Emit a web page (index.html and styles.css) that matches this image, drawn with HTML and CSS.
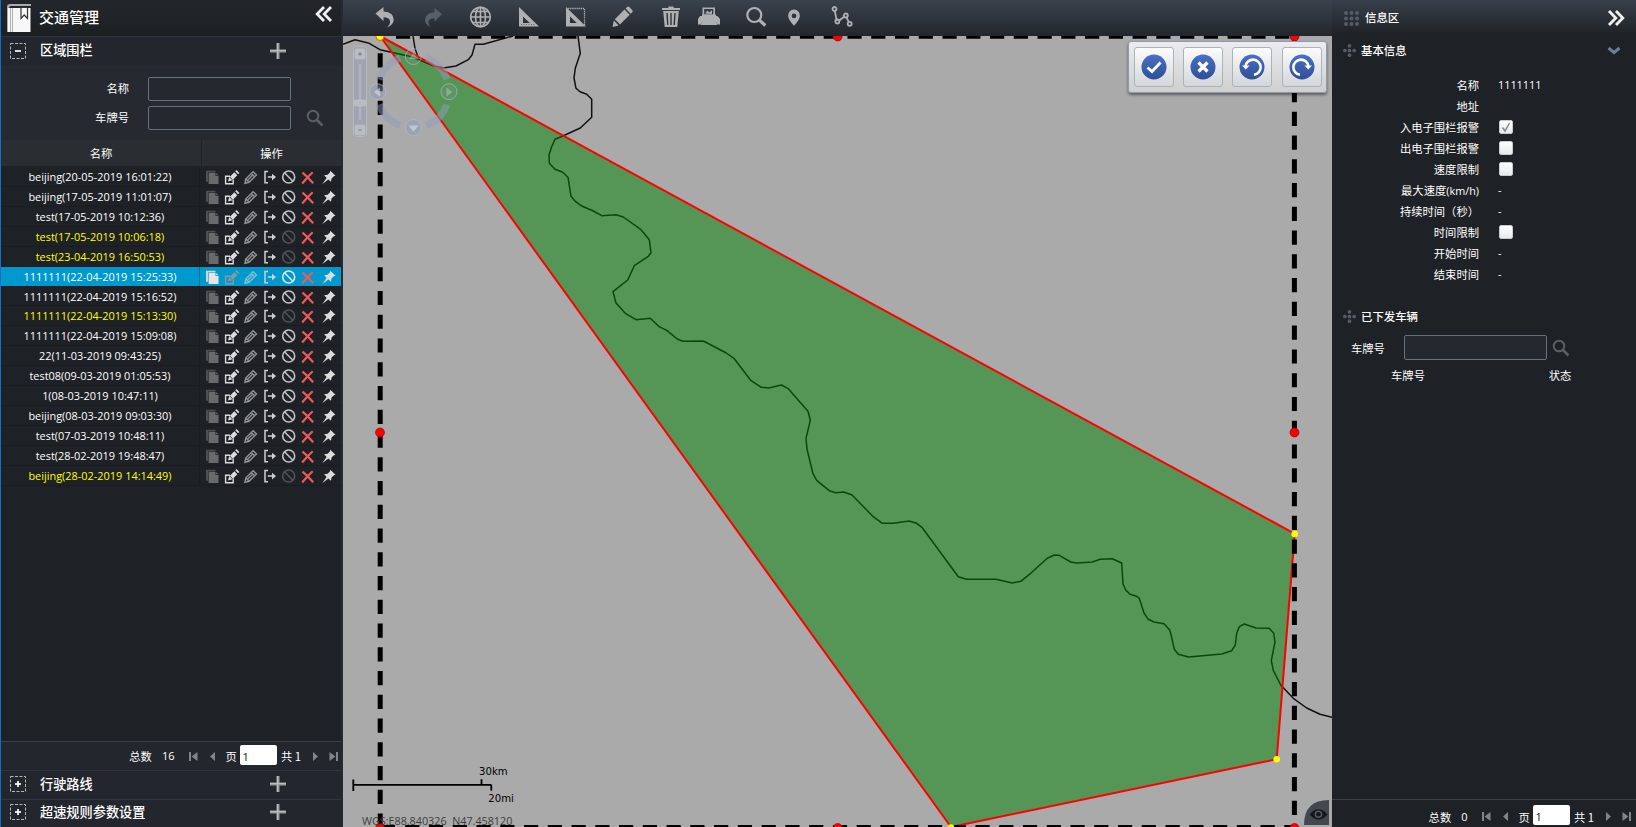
FILE: index.html
```html
<!DOCTYPE html>
<html lang="zh-CN">
<head>
<meta charset="utf-8">
<title>交通管理</title>
<link rel="stylesheet" href="styles.css">
</head>
<body>
<svg class="defs" aria-hidden="true">
  <symbol id="acts" viewBox="0 0 141 20">
    <path class="i-copy-back" d="M6 3.8h9.500v1.600H8v9.400H6z"/>
    <path class="i-copy" d="M8.600 6h6.900v3h3v8H8.600zM16.200 6l2.300 2.300h-2.300z"/>
    <g class="i-edit"><path d="M30 9.200h-4.400v7.600h7.600V12.500" fill="none" stroke-width="1.400"/><path d="M28 14.500l1.200-4.500 3.300 3.300zM29.900 9.800l4.400-4.600 3 3-4.400 4.600zM35.200 4.300l1.300-1.300 2.900 2.900-1.300 1.300z" stroke="none"/></g>
    <g class="i-pen"><path d="M44.9 16.300l.8-4.300 7.400-7.300 3.400 3.200-7.500 7.400zM45.700 12l3.300 3.300M51.300 6.500l3.300 3.300M47.800 13l4.500-4.400" fill="none" stroke-width="1.400"/></g>
    <g class="i-exit"><path d="M68 4.400h-3v11.400h3M67.800 10.100h6" fill="none" stroke-width="1.500"/><path d="M72 6.800l4 3.300-4 3.300z" stroke="none"/></g>
    <g class="i-ban"><circle cx="88.700" cy="10" r="6" fill="none" stroke-width="1.600"/><path d="M84.500 5.800l8.400 8.400" stroke-width="1.600"/></g>
    <path class="i-del" d="M102.500 5.600q5 4 10.700 10.700M112.700 5.200q-5 4.500-10.500 11.300"/>
    <path class="i-pin" d="M130.300 3.800l5.200 4.900-1.600.5-2.400 2.300-.5 3.300-2.700-2.300-6.100 4.700 4.400-6.300-2.500-2.600 3.500-.5 2.300-2.300z"/>
  </symbol>
  <symbol id="plus" viewBox="0 0 18 18"><path d="M9 1v16M1 9h16" stroke="#9b9ea1" stroke-width="3"/><path d="M8.500 1v16M1 8.500h16" stroke="#b9bbbd" stroke-width="1"/></symbol>
  <symbol id="search" viewBox="0 0 18 18"><circle cx="7" cy="7" r="5.300" fill="none" stroke="#5b5f62" stroke-width="2"/><path d="M11 11l5.500 5.500" stroke="#5b5f62" stroke-width="2.600"/></symbol>
  <symbol id="dblleft" viewBox="0 0 18 16"><path d="M9 1L2.200 8 9 15M16 1L9.200 8l6.800 7" fill="none" stroke="#f0f0f0" stroke-width="2.800"/></symbol>
  <symbol id="cross" viewBox="0 0 14 14"><g fill="#555d68"><circle cx="7" cy="2" r="2"/><circle cx="7" cy="7" r="2"/><circle cx="7" cy="12" r="2"/><circle cx="2" cy="7" r="2"/><circle cx="12" cy="7" r="2"/></g></symbol>
  <symbol id="first" viewBox="0 0 9 9"><path d="M0 0h2v9H0zM8.500 0v9L2.500 4.500z" fill="#80858a"/></symbol>
  <symbol id="prev" viewBox="0 0 9 9"><path d="M7 0v9L2 4.500z" fill="#80858a"/></symbol>
  <symbol id="next" viewBox="0 0 9 9"><path d="M2 0v9l5-4.500z" fill="#80858a"/></symbol>
  <symbol id="last" viewBox="0 0 9 9"><path d="M7 0h2v9H7zM.5 0v9l6-4.500z" fill="#80858a"/></symbol>
  <symbol id="box" viewBox="0 0 18 18"><rect x="1.500" y="1.500" width="15" height="15" fill="none" stroke="#b4b7ba" stroke-width="1" stroke-dasharray="3 1.500"/><path d="M6 9h6" stroke="#fff" stroke-width="1.700"/></symbol>
  <linearGradient id="blue" x1="0" y1="0" x2="0" y2="1"><stop offset="0" stop-color="#4a70c4"/><stop offset="1" stop-color="#2f4f97"/></linearGradient>
</svg>

<div class="app">
  <aside class="left">
    <header class="left-head">
      <svg class="book" width="24" height="28" viewBox="0 0 24 28"><path d="M3 0h21v2H3.500L2 3.500V28H0V3q0-3 3-3z" fill="#a9acae"/><path d="M1 4h22.500v24H1z" fill="#f7f7f7"/><path d="M3.500 4v24M5.500 4v24" stroke="#9a9da0" stroke-width=".8"/><path d="M14 3.500h6.500v11L17.200 11 14 14.500z" fill="#f7f7f7" stroke="#303438" stroke-width="1.200"/></svg>
      <h1>交通管理</h1>
      <svg class="collapse" width="18" height="16"><use href="#dblleft"/></svg>
    </header>
    <div class="section">
      <svg width="18" height="18"><use href="#box"/></svg><h2>区域围栏</h2><svg class="add" width="18" height="18"><use href="#plus"/></svg>
    </div>
    <form class="filter">
      <label>名称</label><input type="text"><span></span>
      <label>车牌号</label><input type="text"><svg width="18" height="18"><use href="#search"/></svg>
    </form>
    <div class="thead"><span>名称</span><span>操作</span></div>
    <ul class="list">
      <li><span>beijing(20-05-2019 16:01:22)</span><svg><use href="#acts"/></svg></li>
      <li><span>beijing(17-05-2019 11:01:07)</span><svg><use href="#acts"/></svg></li>
      <li><span>test(17-05-2019 10:12:36)</span><svg><use href="#acts"/></svg></li>
      <li class="off"><span>test(17-05-2019 10:06:18)</span><svg><use href="#acts"/></svg></li>
      <li class="off"><span>test(23-04-2019 16:50:53)</span><svg><use href="#acts"/></svg></li>
      <li class="sel"><span>1111111(22-04-2019 15:25:33)</span><svg><use href="#acts"/></svg></li>
      <li><span>1111111(22-04-2019 15:16:52)</span><svg><use href="#acts"/></svg></li>
      <li class="off"><span>1111111(22-04-2019 15:13:30)</span><svg><use href="#acts"/></svg></li>
      <li><span>1111111(22-04-2019 15:09:08)</span><svg><use href="#acts"/></svg></li>
      <li><span>22(11-03-2019 09:43:25)</span><svg><use href="#acts"/></svg></li>
      <li><span>test08(09-03-2019 01:05:53)</span><svg><use href="#acts"/></svg></li>
      <li><span>1(08-03-2019 10:47:11)</span><svg><use href="#acts"/></svg></li>
      <li><span>beijing(08-03-2019 09:03:30)</span><svg><use href="#acts"/></svg></li>
      <li><span>test(07-03-2019 10:48:11)</span><svg><use href="#acts"/></svg></li>
      <li><span>test(28-02-2019 19:48:47)</span><svg><use href="#acts"/></svg></li>
      <li class="off"><span>beijing(28-02-2019 14:14:49)</span><svg><use href="#acts"/></svg></li>
    </ul>
    <div class="pager">
      <span class="total">总数</span><span class="count">16</span>
      <svg class="p1"><use href="#first"/></svg><svg class="p2"><use href="#prev"/></svg>
      <span class="pg">页</span><input type="text" value="1"><span class="all">共 1</span>
      <svg class="p3"><use href="#next"/></svg><svg class="p4"><use href="#last"/></svg>
    </div>
    <div class="section closed">
      <svg width="18" height="18" viewBox="0 0 18 18"><use href="#box"/><path d="M9 6v6" stroke="#fff" stroke-width="1.700"/></svg><h2>行驶路线</h2><svg class="add" width="18" height="18"><use href="#plus"/></svg>
    </div>
    <div class="section closed">
      <svg width="18" height="18" viewBox="0 0 18 18"><use href="#box"/><path d="M9 6v6" stroke="#fff" stroke-width="1.700"/></svg><h2>超速规则参数设置</h2><svg class="add" width="18" height="18"><use href="#plus"/></svg>
    </div>
  </aside>

  <main class="center">
    <nav class="toolbar">
      <svg viewBox="0 0 24 24"><path d="M2.500 8.500L10.500 2v4.500q10.500.5 10.200 8.500-.3 5-6.700 7.500 3.500-3.500 3-6.500-.7-3.700-6.500-3.700V16z"/></svg>
      <svg class="dim" viewBox="0 0 24 24"><path d="M21 9L13.500 3v4.200Q4 8 4 15.200q.3 4.500 5 6.300-1.800-3-1.500-5 .8-3.300 6-3.300v3.600z"/></svg>
      <svg viewBox="0 0 24 24"><g fill="none" stroke="#aeb0b3" stroke-width="1.600"><circle cx="12.500" cy="12" r="9.800"/><ellipse cx="12.500" cy="12" rx="5" ry="9.800"/><path d="M12.500 2v20M2.500 12h20M4.500 6.500h16M4.500 17.500h16"/></g></svg>
      <svg viewBox="0 0 24 24"><path fill-rule="evenodd" d="M3 2l20 19.500H3zM7 11.500v6.500h6.800z"/><path d="M5 19.500h15" stroke="#60666d" stroke-width="1" stroke-dasharray="1 1.500"/></svg>
      <svg viewBox="0 0 24 24"><path fill-rule="evenodd" d="M3 2l20 19.500H3zM7 11.500v6.500h6.800z"/><path d="M3 3.500h18.500V20" fill="none" stroke="#aeb0b3" stroke-width="1.300" stroke-dasharray="1.300 .8"/></svg>
      <svg viewBox="0 0 24 24"><path d="M1.500 22l1.300-6.500 5 5zM3.800 14.300L13.500 4.500l5.200 5.200-9.700 9.800zM14.600 3.500l1.700-1.700q1-.6 2 .2l3.100 3.200q.7 1-.1 2l-1.600 1.500z"/></svg>
      <svg viewBox="0 0 24 24"><path d="M3 3h6l.8-1.500h4.500L15 3h6v2H3z"/><path fill-rule="evenodd" d="M4.200 6h15.600l-1.500 16H5.700zM7.300 8l.8 12h1.300L8.800 8zm4 0v12h1.400V8zm4 0l-.8 12h1.400l.8-12z"/></svg>
      <svg class="near" viewBox="0 0 24 24"><path fill-rule="evenodd" d="M5.500 2.500h12.500v8h-12.500zM7.200 4V9.500h9.100V4z"/><path d="M8 8.500l2.500-3 2 2L15 5v4zM5 9.500h14v2H5zM3 11h17.500l2.500 3v5.500h-3.500v-2h-15v2H1V14zM5 17.500h14l1 2.500H4z"/></svg>
      <svg viewBox="0 0 24 24"><circle cx="10.300" cy="10" r="7" fill="none" stroke="#aeb0b3" stroke-width="2.200"/><path d="M15.300 15l6 5.500" stroke="#aeb0b3" stroke-width="3.200"/></svg>
      <svg class="near" viewBox="0 0 24 24"><path fill-rule="evenodd" d="M12 4.500q5.800.5 5.800 6.500 0 3.500-5.800 9.800Q6.200 14.500 6.200 11 6.200 5 12 4.500zm0 4a2.400 2.400 0 100 4.800 2.400 2.400 0 000-4.800z"/></svg>
      <svg viewBox="0 0 24 24"><g fill="none" stroke="#aeb0b3" stroke-width="1.800"><path d="M4.800 6l2 10M9 15.800l5-4M16.500 12.300l2.500 5"/><circle cx="4.500" cy="4" r="2"/><circle cx="7.300" cy="16.500" r="2"/><circle cx="15.800" cy="10.500" r="2"/><circle cx="19.700" cy="18.800" r="2"/></g></svg>
    </nav>
    <div class="map">
      <svg class="canvas" viewBox="343 36 989 791" width="989" height="791">
        <g fill="none" stroke="#111" stroke-width="1.500" stroke-linejoin="round">
          <path d="M343 44.300L355 39.700L369.300 43.300L380 49.700L411.700 56.700L433.300 65.700L443.300 68L456 66L468.300 59.700L472 55L475 44.300L483.300 44.300L513 36M413 36L415 48.300L418 57"/>
          <path d="M578 36L580.300 53.300L575.300 68.300L574 78L576 88.300L580 91.700L586.700 94.300L591.700 99.300L591.700 117.300L580.300 128L562.300 136.300L555 139.300L551.700 146.700L549 155L549.300 163.300L555 169.300L562.300 172L568 177.300L571 196.300L575.700 201.700L582.300 206.300L593.300 211L601.700 215.700L616 214.700L623.300 217L641 229.700L649.300 239.700L651 252.700L648.300 256.300L634.300 265.700L627.700 280L613 291.700L616 303L625.700 313.700L636 319.700L650.300 318.300L658.700 326.300L666.700 330.300L677.300 339L683 341.300L702.700 341L705.300 342L726.300 353L734.300 358.700L750.700 380.300L761.300 387.300L768.700 388L781.300 385L788.300 388.700L808 411.300L810.300 420.300L806 438.300L807 449L813 473.700L816.700 480.300L829.300 490.700L835.700 492.700L843.700 492L852 495L873.300 516.700L882.300 523.300L893.300 523.300L909 521L916.700 523.300L922.300 527.700L958.300 576.700L966.700 579.300L996 579.300L1012.300 583L1020.700 581.300L1030.700 573.300L1047.300 558.300L1054.300 555L1059.300 555.300L1070.700 562L1076.700 563L1092.300 562L1100.300 559.300L1112.300 558.700L1121.700 563L1123 584L1125.700 590L1130 594.300L1136.700 596.300L1139.300 598.300L1144 613L1148.300 619.300L1154 622L1164 623.700L1169.700 630L1171.300 635.700L1174.300 649.300L1178.300 654.300L1188.700 657L1221.700 654L1231.700 650.700L1235.300 645L1236.700 633.300L1239.300 626.700L1244.300 624L1256 628L1269.300 628.300L1273.700 633.300L1275 642L1271.300 660.700L1273.300 670.300L1280.700 685L1293.300 698.300L1306.700 708L1320 714.300L1332 717.300"/>
        </g>
        <path d="M380 36l914.700 497.700L1276.700 759.200 951 827z" fill="rgb(0 128 0 / .5)"/>
        <path d="M380 36l914.700 497.700L1276.700 759.200 951 827z" fill="none" stroke="#f00" stroke-width="2"/>
        <g stroke="#000" stroke-width="5" stroke-dasharray="14.200 9.560" fill="none">
          <path d="M396 36.200H1290"/><path d="M405.200 827.500H1294M382 827.500h13"/>
          <path d="M380.200 53.300V827"/><path d="M1294.400 40.500V827"/>
        </g>
        <g fill="#f00" stroke="#8a0000" stroke-width=".6">
          <circle cx="837.700" cy="36.500" r="4.500"/><circle cx="1294.500" cy="36.500" r="4.500"/><circle cx="380" cy="432.500" r="4.500"/><circle cx="1294.500" cy="432.500" r="4.500"/><circle cx="380" cy="828" r="4.500"/><circle cx="837.700" cy="828" r="4.500"/><circle cx="1294.500" cy="828" r="4.500"/>
        </g>
        <circle cx="380" cy="36.500" r="4" fill="#ff0" stroke="#f50" stroke-width="1"/>
        <g fill="#ff0"><circle cx="1294.700" cy="534" r="3.300"/><circle cx="1276.700" cy="759.200" r="3.300"/><circle cx="951" cy="827.500" r="3.300"/></g>
        <g class="panzoom">
          <rect x="353.500" y="46.500" width="13" height="90" rx="3" fill="rgb(145 155 185 / .4)" stroke="rgb(190 195 212 / .6)"/>
          <path d="M360 64v56" stroke="#b3b6c2" stroke-width="2"/>
          <g fill="#b9bbc3" stroke="#c3c5cd" stroke-width=".6"><rect x="355" y="49" width="10" height="10" rx="2"/><rect x="354" y="100" width="12" height="6" rx="2"/><rect x="355" y="125" width="10" height="10" rx="2"/></g>
          <path d="M358 54h4M360 52v4M358.500 130h3" stroke="#7e818b"/>
          <g fill="none" stroke="rgb(145 155 190 / .5)" stroke-width="7"><path d="M426.500 58a36 36 0 0 1 20.500 21.500M447 104.500a36 36 0 0 1-20.500 21M400 125.500a36 36 0 0 1-21-21M379 79.500A36 36 0 0 1 400 58"/></g>
          <g fill="rgb(145 155 190 / .45)" stroke="rgb(185 190 207 / .6)"><circle cx="413.300" cy="56.500" r="8" fill-opacity=".25"/><circle cx="449" cy="91.700" r="8" fill-opacity=".3"/><circle cx="413.300" cy="127.500" r="8"/><circle cx="377.700" cy="91.700" r="8"/></g>
          <path d="M408.500 125.500h10l-5 6zM380 87.500v9L374 92z" fill="rgb(215 217 226 / .65)"/>
          <path d="M409 59h9l-4.500-6zM446.500 87.500v9l6-4.500z" fill="rgb(190 205 200 / .45)"/>
        </g>
        <path d="M353.300 779.500v11.500M353.300 784.800H491.300M481.500 779.300v5.500M491.300 784.800v6" stroke="#000" stroke-width="1.800" fill="none"/>
        <text x="479" y="775.300" class="scale">30km</text>
        <text x="488.300" y="802" class="scale">20mi</text>
        <text x="362" y="825" class="coord" xml:space="preserve">WGS:E88.840326  N47.458120</text>
      </svg>
      <div class="editbar">
        <button><svg viewBox="0 0 26 26"><circle cx="13" cy="13" r="12.500"/><path d="M6.500 13.500l4.500 4 8.500-9"/></svg></button>
        <button><svg viewBox="0 0 26 26"><circle cx="13" cy="13" r="12.500"/><path d="M8.500 8.500l9 9M17.500 8.500l-9 9" stroke-width="3.200"/></svg></button>
        <button><svg viewBox="0 0 26 26"><circle cx="13" cy="13" r="12.500"/><path d="M6.500 12.500a7.600 7.600 0 1 1 8.500 8.300" stroke-width="2.600"/><path class="tip" d="M3 11.500h7.500l-3.700 4z"/></svg></button>
        <button><svg viewBox="0 0 26 26"><circle cx="13" cy="13" r="12.500"/><path d="M19.500 12.500a7.600 7.600 0 1 0-8.500 8.300" stroke-width="2.600"/><path class="tip" d="M23 11.500h-7.500l3.700 4z"/></svg></button>
      </div>
      <svg class="eye" width="25" height="25" viewBox="0 0 25 25"><path d="M0 25Q0 0 25 0v25z" fill="#43474e"/><path d="M5.500 14.500q9-10.500 18 0-9 10-18 0z" fill="#15181b"/><circle cx="14.500" cy="14.200" r="3.800" fill="#555960"/><circle cx="14.500" cy="14.200" r="2.300" fill="#15181b"/></svg>
    </div>
  </main>

  <aside class="right">
    <header class="right-head">
      <svg width="15" height="15" viewBox="0 0 15 15"><g fill="#555d68"><circle cx="2" cy="2" r="2"/><circle cx="7.500" cy="2" r="2"/><circle cx="13" cy="2" r="2"/><circle cx="2" cy="7.500" r="2"/><circle cx="7.500" cy="7.500" r="2"/><circle cx="13" cy="7.500" r="2"/><circle cx="2" cy="13" r="2"/><circle cx="7.500" cy="13" r="2"/><circle cx="13" cy="13" r="2"/></g></svg>
      <h3>信息区</h3>
      <svg class="flip" width="18" height="16"><use href="#dblleft"/></svg>
    </header>
    <div class="info-title"><svg width="13" height="13"><use href="#cross"/></svg><h3>基本信息</h3><svg class="chev" width="14" height="9" viewBox="0 0 14 9"><path d="M1.500 2L7 6.500 12.500 2" fill="none" stroke="#6f7e98" stroke-width="3"/></svg></div>
    <dl class="info">
      <dt>名称</dt><dd>1111111</dd>
      <dt>地址</dt><dd></dd>
      <dt>入电子围栏报警</dt><dd><i class="check"><svg viewBox="0 0 14 14"><path d="M3.500 7.500l2.500 3.500 4.500-8" fill="none" stroke="#888" stroke-width="1.500"/></svg></i></dd>
      <dt>出电子围栏报警</dt><dd><i class="check"></i></dd>
      <dt>速度限制</dt><dd><i class="check"></i></dd>
      <dt>最大速度<span class="lat">(km/h)</span></dt><dd>-</dd>
      <dt>持续时间（秒）</dt><dd>-</dd>
      <dt>时间限制</dt><dd><i class="check"></i></dd>
      <dt>开始时间</dt><dd>-</dd>
      <dt>结束时间</dt><dd>-</dd>
    </dl>
    <div class="info-title second"><svg width="13" height="13"><use href="#cross"/></svg><h3>已下发车辆</h3></div>
    <form class="plate"><label>车牌号</label><input type="text"><svg width="18" height="18"><use href="#search"/></svg></form>
    <div class="cols"><span>车牌号</span><span>状态</span></div>
    <div class="pager">
      <span class="total">总数</span><span class="count">0</span>
      <svg class="p1"><use href="#first"/></svg><svg class="p2"><use href="#prev"/></svg>
      <span class="pg">页</span><input type="text" value="1"><span class="all">共 1</span>
      <svg class="p3"><use href="#next"/></svg><svg class="p4"><use href="#last"/></svg>
    </div>
  </aside>
</div>
</body>
</html>
```
FILE: styles.css
```css
* { box-sizing: border-box; }
body {
  margin: 0;
  overflow: hidden;
  background: #1e2125;
  color: #fff;
  font: 11.3px/16px "Noto Sans CJK SC", sans-serif;
}
h1, h2, h3, ul, dl, dd { margin: 0; padding: 0; }
svg { display: block; flex: none; }
.defs { position: absolute; width: 0; height: 0; }
.app { display: flex; width: 1636px; height: 827px; }
input {
  display: block;
  border: 1px solid #66717d;
  border-radius: 2px;
  background: #24282f;
  outline: 0;
}

/* left panel */
.left {
  display: flex;
  flex-direction: column;
  width: 343px;
  border-left: 1px solid #1470c4;
  border-right: 2px solid #262b33;
  background: #1e2125;
}
.left-head { display: flex; height: 36px; padding: 4px 8px 0 6px; background: linear-gradient(#23272c, #1c1f22); }
.left-head h1 { margin-left: 8px; font-size: 15px; font-weight: 500; line-height: 25px; }
.collapse { margin: 2px 0 0 auto; }
.section {
  display: flex;
  align-items: center;
  height: 29px;
  padding: 0 54px 0 8px;
  border-top: 1px solid #2f3542;
  background: #23262d;
}
.section h2 { margin: -2px 0 0 13px; font-size: 13.2px; font-weight: 500; }
.section .add { margin-left: auto; }
.closed { height: 28.5px; padding-bottom: 2px; }
.closed h2 { margin-top: 0; }
.filter {
  display: grid;
  grid-template: 24px 24px / 128px 19px 143px 15px 18px;
  row-gap: 4.5px;
  height: 75px;
  padding-top: 12px;
  align-items: center;
  background: #262a30;
}
.filter label { grid-column: 1; margin-top: -2px; text-align: right; }
.filter input { grid-column: 3; width: 143px; height: 24px; }
.filter svg, .filter span { grid-column: 5; }
.thead {
  display: grid;
  grid-template-columns: 200px 140px;
  height: 26px;
  line-height: 27px;
  text-align: center;
  background: #2a2e32;
}
.thead span + span { border-left: 1px solid #1f2327; }
.list { flex: 1; padding-top: 1px; list-style: none; }
.list li {
  --copy: #686a6b;
  --copy-back: #4e5052;
  --edit: #dcdcdc;
  --pen: #919395;
  --ban: #c4c4c4;
  display: flex;
  height: 19.93px;
  border-bottom: 1px solid #1a1d20;
  font: 10.93px/20.6px "Open Sans", sans-serif;
  color: #fff;
}
.list span { width: 199px; border-right: 1px solid #1a1d20; text-align: center; white-space: pre; }
.list svg { width: 141px; height: 20px; }
.list .off { --ban: #505356; color: #ff0; }
.list .sel { --copy: #e6e6e6; --copy-back: #cfd5d8; --edit: #8c979e; --pen: #83bdd6; --ban: #dfe5e8; background: #0099cd; }
.sel span { border-color: #0a6f97; }
.i-copy { fill: var(--copy); }
.i-copy-back { fill: var(--copy-back); }
.i-edit { fill: var(--edit); stroke: var(--edit); }
.i-pen { stroke: var(--pen); }
.i-exit { fill: #cfcfcf; stroke: #cfcfcf; }
.i-ban { stroke: var(--ban); }
.i-del { fill: none; stroke: #ee5a5a; stroke-width: 2.2px; }
.i-pin { fill: #dcdcdc; }

/* pagination, shared by both panels */
.pager {
  display: flex;
  justify-content: flex-end;
  align-items: center;
  height: 29px;
  padding-right: 3px;
  border-top: 1px solid #3a404a;
  background: #23262d;
}
.pager svg { width: 9px; height: 9px; }
.pager input {
  width: 37.5px;
  height: 20px;
  margin: -3px 4px 0 2px;
  padding: 3px 3px 0;
  border: 0;
  background: #fff;
  color: #111;
  font: 11px "Open Sans", sans-serif;
}
.count { margin: 0 14px 0 10px; font: 11px/16px "Open Sans", sans-serif; }
.p2 { margin-left: 10px; }
.pg { width: 12px; margin-left: 9px; }
.all { width: 20px; white-space: nowrap; }
.p3 { margin-left: 10px; }
.p4 { margin-left: 9px; }

/* map area */
.center { width: 989px; }
.toolbar {
  display: flex;
  gap: 23.6px;
  height: 36px;
  padding: 5px 0 0 30px;
  background: linear-gradient(#3a424d, #23272d);
}
.toolbar svg { width: 24px; height: 24px; fill: #aeb0b3; }
.toolbar .dim { fill: #595f68; }
.toolbar .near { margin-left: -9.5px; }
.map { position: relative; height: 791px; background: #aaa; }
.scale { font: 10.15px "DejaVu Sans", sans-serif; fill: #000; }
.coord { font: 10.78px "Open Sans", sans-serif; fill: #3c3c3c; }
.editbar {
  position: absolute;
  top: 5px;
  right: 5px;
  display: flex;
  gap: 9.4px;
  width: 199px;
  height: 52px;
  padding: 5px 4.5px;
  border: 1px solid #8e9ab5;
  border-radius: 3px;
  background: linear-gradient(#ececee, #cfcfcf);
  box-shadow: 0 2px 3px rgb(0 0 0 / .45);
}
.editbar button {
  display: flex;
  flex: none;
  align-items: center;
  justify-content: center;
  width: 40px;
  height: 40px;
  padding: 0;
  border: 1px solid #a9b3bd;
  border-radius: 3px;
  background: linear-gradient(#fbfbfb, #d3d7da);
}
.editbar svg { width: 26px; height: 26px; fill: none; stroke: #fff; stroke-width: 2.8px; }
.editbar circle { fill: url(#blue); stroke: none; }
.editbar .tip { fill: #fff; stroke: none; }
.eye { position: absolute; right: 3px; bottom: 2px; }

/* right panel */
.right { display: flex; flex-direction: column; width: 304px; background: #1e2125; }
h3 { font-size: 11.4px; font-weight: 500; }
.right-head {
  display: flex;
  align-items: center;
  height: 36px;
  padding: 0 11px 0 12px;
  background: linear-gradient(#373f4a, #1e2125);
}
.right-head h3 { margin: -2px 0 0 6px; }
.flip { margin-left: auto; transform: scaleX(-1); }
.info-title { display: flex; align-items: center; height: 29px; padding: 0 15px 0 11px; }
.info-title h3 { margin: -2px 0 0 5px; }
.chev { margin-left: auto; }
.info {
  display: grid;
  grid-template-columns: 147px 1fr;
  grid-auto-rows: 21px;
  column-gap: 19px;
  align-items: center;
  margin-top: 9.5px;
}
.info dt { text-align: right; }
.info dd, .lat { font-family: "Open Sans", sans-serif; font-size: 10.85px; }
.check {
  display: block;
  width: 14px;
  height: 14px;
  margin-left: 1px;
  border: 1px solid #c4cbd0;
  border-radius: 2px;
  background: linear-gradient(#fff, #e6e9eb);
}
.check svg { margin: -1px; width: 14px; height: 14px; }
.second { margin-top: 17.5px; }
.plate { display: flex; align-items: center; height: 25px; margin: 4px 0 0 19px; }
.plate input { width: 143px; height: 25px; margin: 0 5px 0 19px; }
.cols { display: grid; grid-template-columns: 152px 1fr; height: 28px; line-height: 30px; text-align: center; }
.right .pager { height: 28px; margin-top: auto; padding: 6px 5px 0 0; background: #1e2125; }
```
